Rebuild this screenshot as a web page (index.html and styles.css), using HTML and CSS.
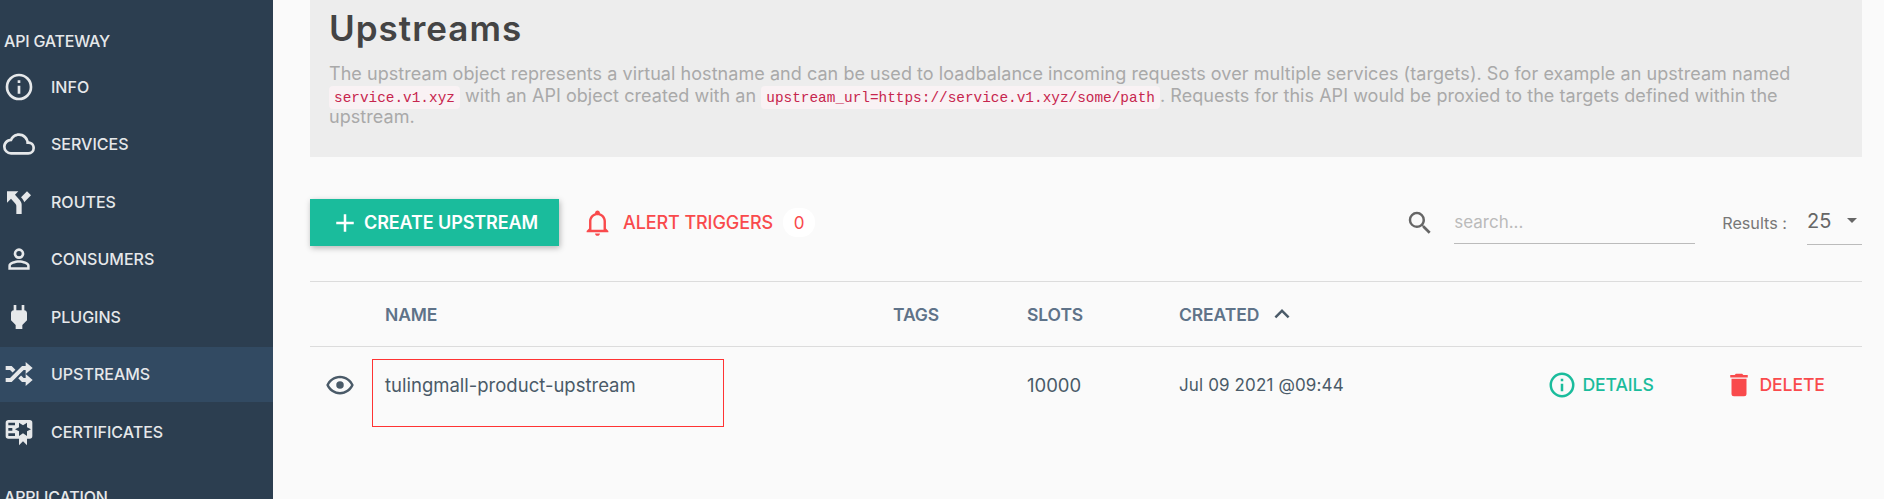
FILE: index.html
```html
<!DOCTYPE html>
<html lang="en">
<head>
<meta charset="utf-8">
<title>Upstreams</title>
<link rel="stylesheet" href="styles.css">
</head>
<body>
<div class="page">
  <aside class="sidebar">
    <div class="side-title">API GATEWAY</div>
    <a class="side-item"><svg class="side-icon" viewBox="0 0 24 24"><path d="M11,9H13V7H11M12,20C7.59,20 4,16.41 4,12C4,7.59 7.59,4 12,4C16.41,4 20,7.59 20,12C20,16.41 16.41,20 12,20M12,2A10,10 0 0,0 2,12A10,10 0 0,0 12,22A10,10 0 0,0 22,12A10,10 0 0,0 12,2M11,17H13V11H11V17Z"/></svg><span>INFO</span></a>
    <a class="side-item"><svg class="side-icon" viewBox="0 0 24 24"><path d="M19,18H6A4,4 0 0,1 2,14A4,4 0 0,1 6,10H6.71C7.37,7.69 9.5,6 12,6A5.5,5.5 0 0,1 17.5,11.5V12H19A3,3 0 0,1 22,15A3,3 0 0,1 19,18M19.35,10.03C18.67,6.59 15.64,4 12,4C9.11,4 6.6,5.64 5.35,8.03C2.34,8.36 0,10.9 0,14A6,6 0 0,0 6,20H19A5,5 0 0,0 24,15C24,12.36 21.95,10.22 19.35,10.03Z"/></svg><span>SERVICES</span></a>
    <a class="side-item"><svg class="side-icon" viewBox="0 0 24 24"><path d="M3,4V12.5L6,9.5L9,13C10,14 10,15 10,15V21H14V14C14,14 14,13 13.47,12C12.94,11 12,10 12,10L9,6.58L11.5,4M18,4L13.54,8.47L14,9C14,9 14.93,10 15.47,11C15.68,11.4 15.8,11.79 15.87,12.13L21,7"/></svg><span>ROUTES</span></a>
    <a class="side-item"><svg class="side-icon" viewBox="0 0 24 24"><path d="M12,4A4,4 0 0,1 16,8A4,4 0 0,1 12,12A4,4 0 0,1 8,8A4,4 0 0,1 12,4M12,6A2,2 0 0,0 10,8A2,2 0 0,0 12,10A2,2 0 0,0 14,8A2,2 0 0,0 12,6M12,13C14.67,13 20,14.33 20,17V20H4V17C4,14.33 9.33,13 12,13M12,14.9C9.03,14.9 5.9,16.36 5.9,17V18.1H18.1V17C18.1,16.36 14.97,14.9 12,14.9Z"/></svg><span>CONSUMERS</span></a>
    <a class="side-item"><svg class="side-icon" viewBox="0 0 24 24"><path d="M16,7V3H14V7H10V3H8V7H8C7,7 6,8 6,9V14.5L9.5,18V21H14.5V18L18,14.5V9C18,8 17,7 16,7Z"/></svg><span>PLUGINS</span></a>
    <a class="side-item active"><svg class="side-icon" viewBox="0 0 24 24"><path d="M17,3L22.25,7.5L17,12L22.25,16.5L17,21V18H14.26L11.44,15.18L13.56,13.06L15.5,15H17V12L17,9H15.5L6.5,18H2V15H5.26L14.26,6H17V3M2,6H6.5L9.32,8.82L7.2,10.94L5.26,9H2V6Z"/></svg><span>UPSTREAMS</span></a>
    <a class="side-item"><svg class="side-icon" viewBox="0 0 24 24"><path d="M4,3C2.89,3 2,3.89 2,5V15A2,2 0 0,0 4,17H12V22L15,19L18,22V17H20A2,2 0 0,0 22,15V8L22,6V5A2,2 0 0,0 20,3H16V3H4M12,5L15,7L18,5V8.5L21,10L18,11.5V15L15,13L12,15V11.5L9,10L12,8.5V5M4,5H9V7H4V5M4,9H7V11H4V9M4,13H9V15H4V13Z"/></svg><span>CERTIFICATES</span></a>
    <div class="side-title side-title-next">APPLICATION</div>
  </aside>
  <main class="main">
    <header class="intro">
      <h1 class="intro-title">Upstreams</h1>
      <p class="intro-text">The upstream object represents a virtual hostname and can be used to loadbalance incoming requests over multiple services (targets). So for example an upstream named <code>service.v1.xyz</code> with an API object created with an <code>upstream_url=https://service.v1.xyz/some/path</code>. Requests for this API would be proxied to the targets defined within the upstream.</p>
    </header>
    <div class="toolbar">
      <button class="btn-create"><svg class="btn-icon" viewBox="0 0 24 24"><path d="M19,13H13V19H11V13H5V11H11V5H13V11H19V13Z"/></svg><span>CREATE UPSTREAM</span></button>
      <a class="alert-link"><svg class="bell" viewBox="0 0 24 24"><path d="M10 21H14C14 22.1 13.1 23 12 23S10 22.1 10 21M21 19V20H3V19L5 17V11C5 7.9 7 5.2 10 4.3V4C10 2.9 10.9 2 12 2S14 2.9 14 4V4.3C17 5.2 19 7.9 19 11V17L21 19M17 11C17 8.2 14.8 6 12 6S7 8.2 7 11V18H17V11Z"/></svg><span>ALERT TRIGGERS</span><span class="count">0</span></a>
      <div class="spacer"></div>
      <svg class="search-icon" viewBox="0 0 24 24"><path d="M9.5,3A6.5,6.5 0 0,1 16,9.5C16,11.11 15.41,12.59 14.44,13.73L14.71,14H15.5L20.5,19L19,20.5L14,15.5V14.71L13.73,14.44C12.59,15.41 11.11,16 9.5,16A6.5,6.5 0 0,1 3,9.5A6.5,6.5 0 0,1 9.5,3M9.5,5C7,5 5,7 5,9.5C5,12 7,14 9.5,14C12,14 14,12 14,9.5C14,7 12,5 9.5,5Z"/></svg>
      <div class="search-field">search...</div>
      <span class="results-label">Results :</span>
      <div class="results-select"><span>25</span><i class="caret"></i></div>
    </div>
    <section class="table">
      <div class="row head">
        <div></div>
        <div>NAME</div>
        <div>TAGS</div>
        <div>SLOTS</div>
        <div class="created">CREATED <svg class="sort" viewBox="0 0 24 24"><path d="M7.41,15.41L12,10.83L16.59,15.41L18,14L12,8L6,14L7.41,15.41Z"/></svg></div>
      </div>
      <div class="row body">
        <svg class="eye" viewBox="0 0 24 24"><path d="M12,9A3,3 0 0,1 15,12A3,3 0 0,1 12,15A3,3 0 0,1 9,12A3,3 0 0,1 12,9M12,4.5C17,4.5 21.27,7.61 23,12C21.27,16.39 17,19.5 12,19.5C7,19.5 2.73,16.39 1,12C2.73,7.61 7,4.5 12,4.5M3.18,12C4.83,15.36 8.24,17.5 12,17.5C15.76,17.5 19.17,15.36 20.82,12C19.17,8.64 15.76,6.5 12,6.5C8.24,6.5 4.83,8.64 3.18,12Z"/></svg>
        <div class="name-cell">tulingmall-product-upstream<div class="annotation"></div></div>
        <div></div>
        <div>10000</div>
        <div class="date">Jul 09 2021 @09:44</div>
        <a class="action details"><svg viewBox="0 0 24 24"><path d="M11,9H13V7H11M12,20C7.59,20 4,16.41 4,12C4,7.59 7.59,4 12,4C16.41,4 20,7.59 20,12C20,16.41 16.41,20 12,20M12,2A10,10 0 0,0 2,12A10,10 0 0,0 12,22A10,10 0 0,0 22,12A10,10 0 0,0 12,2M11,17H13V11H11V17Z"/></svg><span>DETAILS</span></a>
        <a class="action delete"><svg viewBox="0 0 24 24"><path d="M19,4H15.5L14.5,3H9.5L8.5,4H5V6H19M6,19A2,2 0 0,0 8,21H16A2,2 0 0,0 18,19V7H6V19Z"/></svg><span>DELETE</span></a>
      </div>
    </section>
  </main>
</div>
</body>
</html>
```
FILE: styles.css
```css
* { box-sizing: border-box; }
html, body { margin: 0; height: 499px; overflow: hidden; }
body { font-family: "Inter", "Liberation Sans", sans-serif; background: #fafafa; }
.page { display: flex; height: 499px; overflow: hidden; }

.sidebar { width: 273px; flex: none; background: #2c3e50; color: #e6e8ea; padding-top: 30px; overflow: hidden; }
.side-title { height: 22px; line-height: 22px; padding-left: 4px; font-size: 16px; font-weight: 500; letter-spacing: -0.2px; margin-bottom: 6px; }
.side-title-next { margin-top: 25px; }
.side-item { display: flex; align-items: center; height: 57.5px; padding-left: 3px; gap: 16px; font-size: 16px; font-weight: 500; }
.side-item.active { background: #324a62; height: 55px; margin: 1px 0 1.5px; }
.side-icon { width: 32px; height: 32px; fill: #e6e8ea; flex: none; }

.main { flex: 1; padding: 0 22px 0 37px; min-width: 0; }
.intro { height: 157px; background: #ededed; padding: 0 62px 0 19px; }
.intro-title { margin: 0; padding-top: 6px; font-size: 35px; line-height: 45px; font-weight: 600; letter-spacing: 1px; color: #444; }
.intro-text { margin: 12px 0 0; font-size: 18px; letter-spacing: 0.05px; line-height: 21.5px; color: #a9a9a9; }
code { font-family: "Liberation Mono", monospace; font-size: 14.4px; line-height: 1; letter-spacing: 0; color: #c7254e; background: #f9f2f4; padding: 3.5px 5px; border-radius: 4px; }

.toolbar { display: flex; align-items: center; height: 47px; margin-top: 42px; }
.btn-create { display: flex; align-items: center; width: 249px; height: 47px; padding: 0 0 0 20px; gap: 4px; border: 0; background: #1abc9c; color: #fff; font: 600 18px "Inter", sans-serif; letter-spacing: -0.1px; box-shadow: 1px 2px 6px rgba(0,0,0,.28); }
.btn-icon { width: 30px; height: 30px; fill: #fff; flex: none; }
.alert-link { display: flex; align-items: center; margin-left: 24px; color: #f94a4c; font-size: 18px; font-weight: 500; letter-spacing: -0.1px; }
.bell { width: 29px; height: 29px; fill: #f94a4c; margin-right: 11px; }
.count { width: 32px; height: 29px; margin-left: 10px; border-radius: 14px; background: #fff; display: flex; align-items: center; justify-content: center; font-size: 17px; font-weight: 400; }
.spacer { flex: 1; }
.search-icon { width: 30px; height: 30px; fill: #666; margin-right: 19px; }
.search-field { align-self: flex-start; width: 241px; height: 45px; line-height: 46px; border-bottom: 1.5px solid #bbb; font-size: 17px; color: #bbb; margin-right: 27px; }
.results-label { font-size: 16.2px; color: #777; margin-right: 20px; }
.results-select { align-self: flex-start; position: relative; width: 55px; height: 46px; line-height: 45px; border-bottom: 1.5px solid #bbb; font-size: 20px; color: #666; }
.caret { position: absolute; right: 5px; top: 19px; border: 5px solid transparent; border-top: 5px solid #666; border-bottom: 0; }

.table { margin-top: 35px; }
.row { display: grid; grid-template-columns: 75px 508px 134px 152px 368px 177px 138px; align-items: center; border-top: 1px solid #dcdcdc; }
.head { height: 65px; color: #5f7389; font-size: 17.5px; font-weight: 600; letter-spacing: -0.1px; }
.created { display: flex; align-items: center; gap: 8px; }
.sort { width: 30px; height: 30px; fill: #4a5a68; }
.body { height: 80px; padding-bottom: 3px; color: #4a5a68; font-size: 18.5px; line-height: 22px; }
.date { font-size: 17px; letter-spacing: 0.13px; white-space: nowrap; }
.eye { width: 30px; height: 30px; fill: #4a5a68; margin-left: 15px; }
.name-cell { position: relative; }
.annotation { position: absolute; left: -13px; top: -15px; width: 352px; height: 68px; border: 1px solid #f33; }
.action { display: flex; align-items: center; gap: 5.5px; font-size: 17.6px; font-weight: 500; letter-spacing: -0.1px; }
.action svg { width: 30px; height: 30px; flex: none; }
.details { color: #1abc9c; }
.details svg { fill: #1abc9c; }
.delete { color: #f94a4c; }
.delete svg { fill: #f94a4c; }
```
